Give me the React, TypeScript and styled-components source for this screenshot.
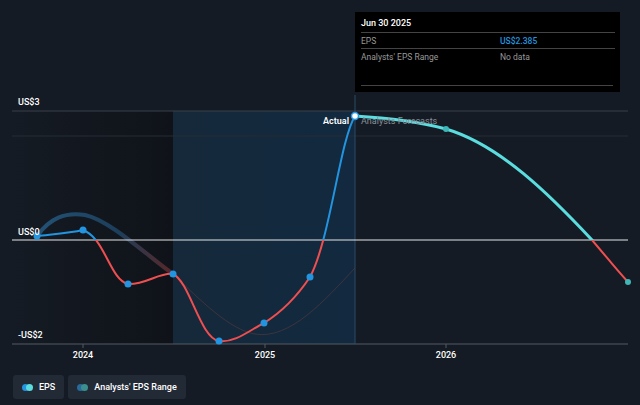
import React from "react";
import styled, { createGlobalStyle } from "styled-components";

const Global = createGlobalStyle`
  html, body { margin: 0; padding: 0; background: #151b24; }
  body { font-family: Roboto, "Liberation Sans", sans-serif; }
`;

const Page = styled.div`
  width: 640px; height: 405px; position: relative; overflow: hidden; background: #151b24;
  display: flex; flex-direction: column;
`;
const ChartArea = styled.div`position: relative; height: 364px; flex: none;`;
const Svg = styled.svg`position: absolute; left: 0; top: 0;`;
const Tooltip = styled.div`
  position: absolute; left: 355px; top: 12px; width: 265px; height: 80px; background: #000;
  box-sizing: border-box; padding: 6px 5px 0 6px; color: #fff; font-size: 8.5px;
`;
const TipTitle = styled.div`font-weight: 500; font-size: 9px; padding-bottom: 4px; border-bottom: 1px solid #444;`;
const TipRow = styled.div<{ line?: boolean }>`
  display: grid; grid-template-columns: 139px 1fr; padding: 3px 0 2px; color: #999;
  border-bottom: ${(p) => (p.line ? "1px solid #444" : "none")};
`;
const Val = styled.span<{ c: string }>`color: ${(p) => p.c}; font-weight: ${(p) => (p.c === "#999" ? 400 : 500)};`;
const TipFoot = styled.div`position: absolute; left: 6px; right: 7px; top: 73px; border-top: 1px solid #444;`;
const Legend = styled.div`display: flex; gap: 4px; padding: 11px 0 0 13px;`;
const LegendBtn = styled.div`
  height: 24px; display: flex; align-items: center; gap: 6px; padding: 0 9px; box-sizing: border-box;
  background: #222a35; border-radius: 3px; color: #fff; font-size: 9px; font-weight: 500;
`;
const Dots = styled.span`display: inline-flex;`;
const Dot = styled.span<{ c: string; o?: number }>`
  width: 7px; height: 7px; border-radius: 50%; background: ${(p) => p.c}; margin-left: ${(p) => p.o ?? 0}px;
`;

const actual = "M37,236 C55,234 70,233 83,230 C105,238 110,280 128,284 C145,285 160,272 173,274 C190,282 200,338 219,341 C235,343 250,330 264,323 C285,310 298,295 310,277 C330,240 340,140 355,116";
const forecast = "M355,116 C390,118 420,122 446,129 C500,145 550,195 592,240 C605,255 615,268 628,282";

export default function App() {
  return (
    <Page>
      <Global />
      <ChartArea>
        <Svg width="640" height="364" viewBox="0 0 640 364">
          <defs>
            <linearGradient id="hist" x1="0" x2="1">
              <stop offset="0" stopColor="#151b24" />
              <stop offset="1" stopColor="#0f1319" />
            </linearGradient>
            <linearGradient id="hl" x1="0" x2="1">
              <stop offset="0" stopColor="#15293a" />
              <stop offset="1" stopColor="#12293f" />
            </linearGradient>
            <clipPath id="above"><rect x="0" y="0" width="640" height="240" /></clipPath>
            <clipPath id="below"><rect x="0" y="240" width="640" height="130" /></clipPath>
            <linearGradient id="band" x1="0" x2="1">
              <stop offset="0" stopColor="#2a6a9a" stopOpacity="0.7" />
              <stop offset="0.6" stopColor="#235a84" stopOpacity="0.6" />
              <stop offset="1" stopColor="#a03a3a" stopOpacity="0.5" />
            </linearGradient>
          </defs>
          <rect x="12" y="111" width="161" height="233" fill="url(#hist)" />
          <rect x="173" y="111" width="182" height="233" fill="url(#hl)" />
          <line x1="12" x2="628" y1="111" y2="111" stroke="#3a4048" strokeWidth="1" />
          <line x1="12" x2="628" y1="136" y2="136" stroke="#262c34" strokeWidth="1" />
          <line x1="12" x2="628" y1="344" y2="344" stroke="#555b63" strokeWidth="1" />
          <line x1="355" x2="355" y1="95" y2="344" stroke="#2b4d66" strokeWidth="1" />
          <path d="M37,236 C50,218 65,212 85,215 C110,220 150,258 173,274" fill="none" stroke="url(#band)" strokeWidth="4" strokeLinecap="round" />
          <path d="M173,274 C200,300 230,330 255,334 C290,340 325,300 355,268" fill="none" stroke="#5a3a40" strokeWidth="1" opacity="0.6" />
          <line x1="12" x2="628" y1="240" y2="240" stroke="#e6e6e6" strokeWidth="1.2" />
          <path d={actual} fill="none" stroke="#2394df" strokeWidth="2" clipPath="url(#above)" />
          <path d={actual} fill="none" stroke="#ef4f50" strokeWidth="2" clipPath="url(#below)" />
          <path d={forecast} fill="none" stroke="#5bdde0" strokeWidth="3" clipPath="url(#above)" />
          <path d={forecast} fill="none" stroke="#ef4f50" strokeWidth="2" clipPath="url(#below)" />
          {[[37,236],[83,230],[128,284],[173,274],[219,341],[264,323],[310,277]].map(([x,y]) => (
            <circle key={x} cx={x} cy={y} r="3.5" fill="#2394df" />
          ))}
          <circle cx="446" cy="129" r="3" fill="#3fb6b8" />
          <circle cx="628" cy="282" r="3" fill="#3fb6b8" />
          <circle cx="355" cy="116" r="3.5" fill="#fff" stroke="#2394df" strokeWidth="1.5" />
          <text x="18" y="105" fill="#fff" fontSize="9" fontWeight="500" fontFamily="Roboto">US$3</text>
          <text x="18" y="235" fill="#fff" fontSize="9" fontWeight="500" fontFamily="Roboto">US$0</text>
          <text x="18" y="338" fill="#fff" fontSize="9" fontWeight="500" fontFamily="Roboto">-US$2</text>
          <text x="349" y="124" fill="#fff" fontSize="9" fontWeight="600" textAnchor="end" fontFamily="Roboto">Actual</text>
          <text x="361" y="124" fill="#8a9098" fontSize="9" fontFamily="Roboto">Analysts Forecasts</text>
          <line x1="83" x2="83" y1="344" y2="348" stroke="#555b63" />
          <line x1="265" x2="265" y1="344" y2="348" stroke="#555b63" />
          <line x1="446" x2="446" y1="344" y2="348" stroke="#555b63" />
          {[["2024",83],["2025",265],["2026",446]].map(([t,x]) => (
            <text key={t as string} x={x as number} y="358" fill="#fff" fontSize="9" fontWeight="500" textAnchor="middle" fontFamily="Roboto">{t}</text>
          ))}
        </Svg>
        <Tooltip>
          <TipTitle>Jun 30 2025</TipTitle>
          <TipRow line><span>EPS</span><Val c="#2394df">US$2.385</Val></TipRow>
          <TipRow><span>Analysts' EPS Range</span><Val c="#999">No data</Val></TipRow>
          <TipFoot />
        </Tooltip>
      </ChartArea>
      <Legend>
        <LegendBtn><Dots><Dot c="#2394df" /><Dot c="#5bdde0" o={-3} /></Dots>EPS</LegendBtn>
        <LegendBtn><Dots><Dot c="#2a6a9a" /><Dot c="#3a8f8f" o={-3} /></Dots>Analysts' EPS Range</LegendBtn>
      </Legend>
    </Page>
  );
}
